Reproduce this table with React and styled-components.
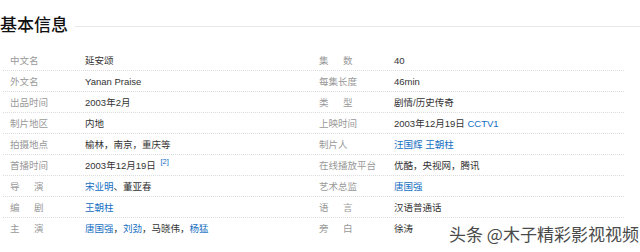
import React from "react";
import styled, { createGlobalStyle } from "styled-components";

const GlobalStyle = createGlobalStyle`
  html, body {
    margin: 0;
    padding: 0;
    background: #fff;
  }
  body {
    font-family: "Liberation Sans", "Noto Sans CJK SC", sans-serif;
    width: 640px;
    height: 252px;
    overflow: hidden;
  }
`;

const left = [
  { label: "中文名", value: ["延安颂"] },
  { label: "外文名", value: ["Yanan Praise"] },
  { label: "出品时间", value: ["2003年2月"] },
  { label: "制片地区", value: ["内地"] },
  { label: "拍摄地点", value: ["榆林，南京，重庆等"] },
  { label: "首播时间", value: ["2003年12月19日 "], sup: "[2]" },
  { label: "导　演", wide: true, value: [{ link: "宋业明" }, "、董亚春"] },
  { label: "编　剧", wide: true, value: [{ link: "王朝柱" }] },
  {
    label: "主　演",
    wide: true,
    value: [{ link: "唐国强" }, "，", { link: "刘劲" }, "，马晓伟，", { link: "杨猛" }],
  },
];

const right = [
  { label: "集　数", wide: true, value: ["40"] },
  { label: "每集长度", value: ["46min"] },
  { label: "类　型", wide: true, value: ["剧情/历史传奇"] },
  { label: "上映时间", value: ["2003年12月19日 ", { link: "CCTV1" }] },
  { label: "制片人", value: [{ link: "汪国辉" }, " ", { link: "王朝柱" }] },
  { label: "在线播放平台", value: ["优酷，央视网，腾讯"] },
  { label: "艺术总监", value: [{ link: "唐国强" }] },
  { label: "语　言", wide: true, value: ["汉语普通话"] },
  { label: "旁　白", wide: true, value: ["徐涛"] },
];

const Info = () => (
  <Page>
    <GlobalStyle />
    <TitleBar>
      <Title>基本信息</Title>
      <TitleRule />
    </TitleBar>
    <Rows>
      {left.map((item, i) => (
        <Row key={i} $last={i === left.length - 1}>
          <Cell item={item} />
          <Cell item={right[i]} />
        </Row>
      ))}
    </Rows>
    <Watermark>头条 @木子精彩影视视频</Watermark>
  </Page>
);

const Cell = ({ item }) => (
  <Pair>
    <Label $wide={item.wide}>{item.label}</Label>
    <Value>
      {item.value.map((part, j) =>
        typeof part === "string" ? (
          <span key={j}>{part}</span>
        ) : (
          <Link key={j}>{part.link}</Link>
        )
      )}
      {item.sup && <Sup>{item.sup}</Sup>}
    </Value>
  </Pair>
);

const Page = styled.div`
  position: relative;
  width: 640px;
  height: 252px;
`;

const TitleBar = styled.div`
  display: flex;
  align-items: center;
  padding-top: 13px;
  height: 22px;
  margin-bottom: 15px;
`;

const Title = styled.h2`
  margin: 0;
  font-family: "Noto Sans CJK SC", sans-serif;
  font-size: 17px;
  line-height: 22px;
  font-weight: 500;
  color: #111;
  white-space: nowrap;
`;

const TitleRule = styled.div`
  flex: 1;
  height: 1px;
  margin-left: 7px;
  margin-top: 5px;
  background: #e8e8e8;
`;

const Rows = styled.div`
  display: flex;
  flex-direction: column;
  width: 621px;
  margin-left: 3px;
`;

const Row = styled.div`
  display: grid;
  grid-template-columns: 309px 312px;
  height: 20px;
  align-items: center;
  border-bottom: 1px dotted ${(p) => (p.$last ? "transparent" : "#dcdcdc")};
`;

const Pair = styled.div`
  display: flex;
  align-items: center;
  padding-left: 7px;
  font-size: 9.5px;
  white-space: nowrap;
`;

const Label = styled.span`
  width: 75px;
  flex-shrink: 0;
  color: #999;
  letter-spacing: ${(p) => (p.$wide ? "2.5px" : "0")};
`;

const Value = styled.span`
  color: #333;
`;

const Link = styled.span`
  color: #136ec2;
`;

const Sup = styled.sup`
  color: #136ec2;
  font-size: 7.5px;
  margin-left: 2px;
  vertical-align: 5px;
  line-height: 0;
`;

const Watermark = styled.div`
  position: absolute;
  left: 449px;
  top: 224px;
  font-family: "Noto Sans CJK SC", sans-serif;
  font-size: 17px;
  line-height: 20px;
  color: #4a4a4a;
  white-space: nowrap;
  text-shadow: 0 0 2px #fff, 0 0 2px #fff;
`;

export default Info;
